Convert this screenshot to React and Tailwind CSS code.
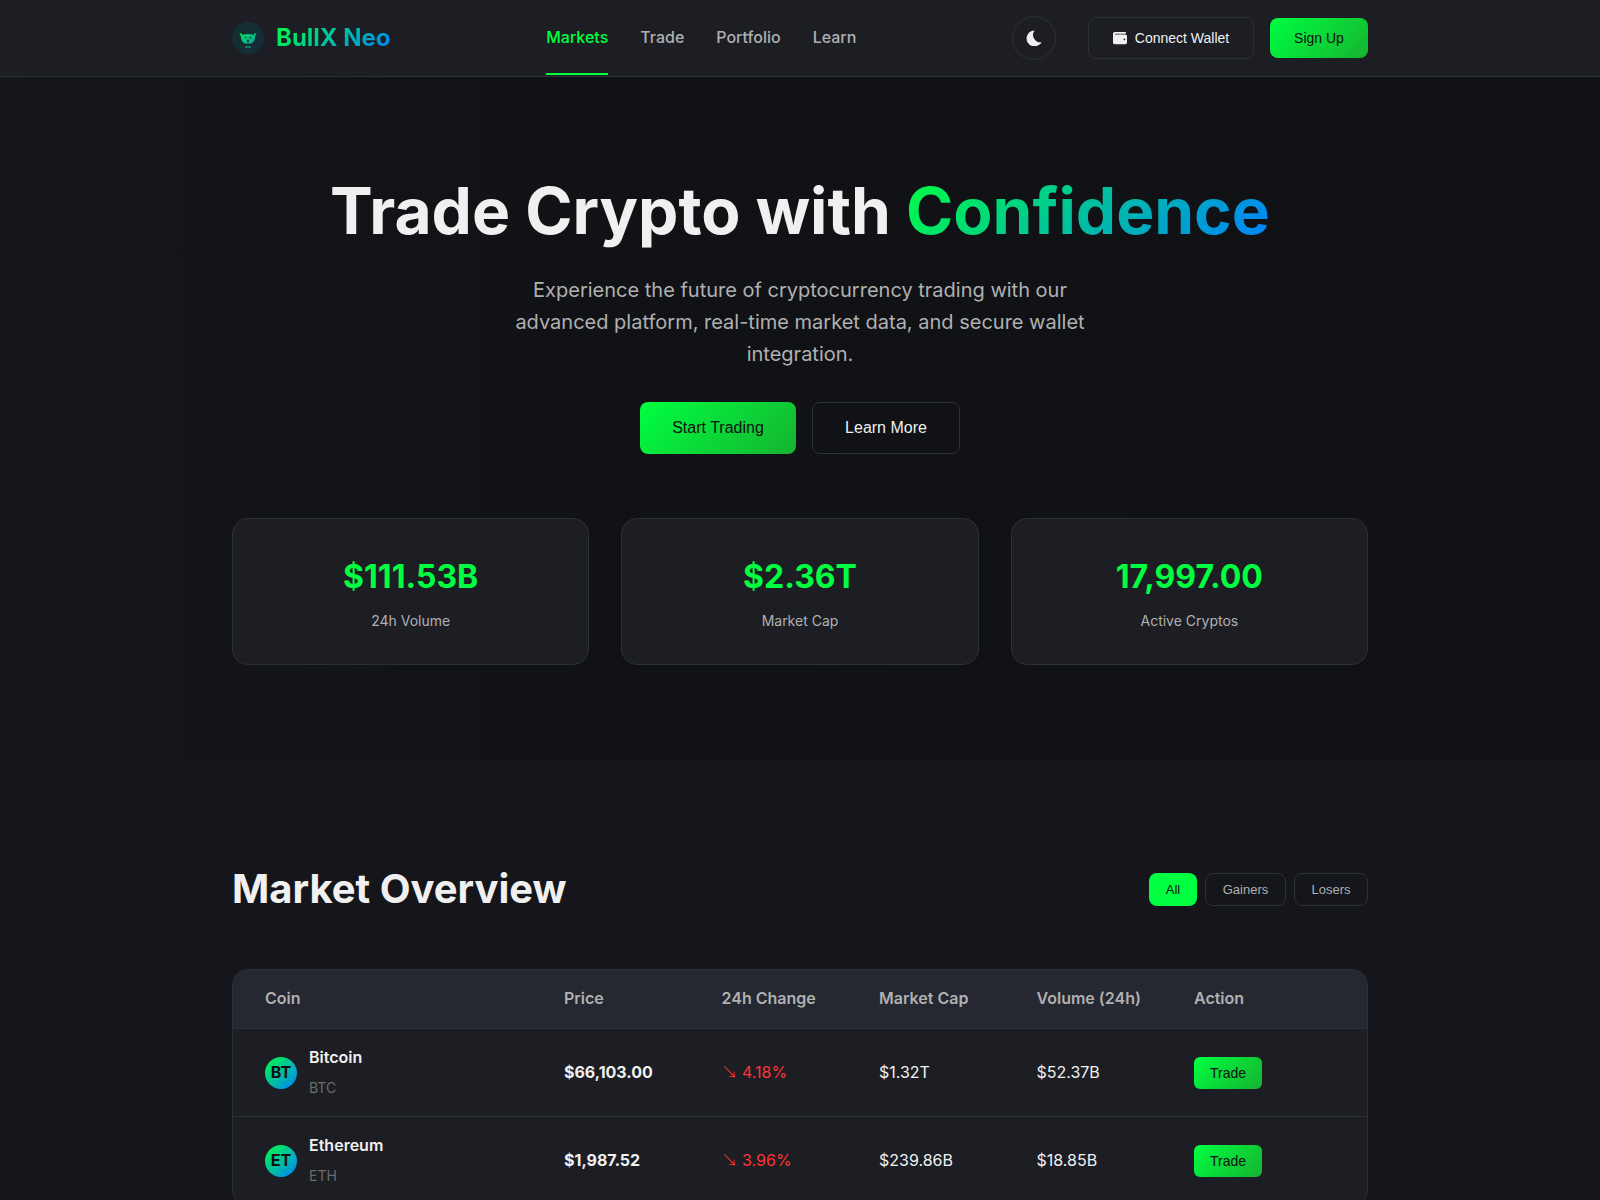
import React from "react";

const Wallet = () => (
  <svg viewBox="0 0 512 512" className="w-[14px] h-[14px]" fill="currentColor">
    <path d="M64 32C28.7 32 0 60.7 0 96V416c0 35.3 28.7 64 64 64H448c35.3 0 64-28.7 64-64V192c0-35.3-28.7-64-64-64H80c-8.8 0-16-7.2-16-16s7.2-16 16-16H448c17.7 0 32-14.3 32-32s-14.3-32-32-32H64zM416 272a32 32 0 1 1 0 64 32 32 0 1 1 0-64z" />
  </svg>
);

const Moon = () => (
  <svg viewBox="0 0 16 16" className="w-[16px] h-[16px]" fill="#f0f0f0">
    <path d="M8.6 0.4A8 8 0 1 0 15.6 12.2A7.4 7.4 0 0 1 8.6 0.4Z" />
  </svg>
);

const Logo = () => (
  <div className="w-[32px] h-[32px] rounded-full bg-[linear-gradient(135deg,#12302c,#152c3c)] flex items-center justify-center">
    <svg viewBox="0 0 32 32" className="w-[32px] h-[32px]">
      <defs>
        <linearGradient id="lg" x1="0" y1="0" x2="1" y2="1">
          <stop offset="0" stopColor="#00e858" />
          <stop offset="1" stopColor="#10a0a0" />
        </linearGradient>
      </defs>
      <path d="M7.5 10.5L11 12.8Q16 11.4 21 12.8L24.5 10.5L23 15Q22.8 20.4 19 21.4H13Q9.2 20.4 9 15Z" fill="url(#lg)" />
      <circle cx="13.6" cy="15.6" r="0.9" fill="#12403c" />
      <circle cx="18.4" cy="15.6" r="0.9" fill="#12403c" />
      <ellipse cx="16" cy="19" rx="1.2" ry="1.5" fill="#12403c" />
      <rect x="13" y="24" width="6" height="2" fill="#0c7a5a" />
    </svg>
  </div>
);

const NavLink = ({ children, active }) => (
  <a className={active
    ? "relative h-[76px] pb-[1px] flex items-center text-[16px] font-medium text-[#00ff41]"
    : "relative h-[76px] pb-[1px] flex items-center text-[16px] font-medium text-[#b0b0b0]"}>
    {children}
    {active && <span className="absolute left-0 right-0 bottom-[1px] h-[2px] bg-[#00ff41]" />}
  </a>
);

const Stat = ({ value, label }) => (
  <div className="h-[147px] bg-[#1c1e24] border border-[#2e3038] rounded-[16px] flex flex-col items-center pt-[32px]">
    <div className="text-[32px] leading-[51.2px] font-bold text-[#00ff41]">{value}</div>
    <div className="text-[14px] leading-[22.4px] mt-[8px] text-[#b0b0b0]">{label}</div>
  </div>
);

const rows = [
  { i: "BT", name: "Bitcoin", sym: "BTC", price: "$66,103.00", ch: "4.18%", cap: "$1.32T", vol: "$52.37B" },
  { i: "ET", name: "Ethereum", sym: "ETH", price: "$1,987.52", ch: "3.96%", cap: "$239.86B", vol: "$18.85B" },
];

export default function App() {
  return (
    <div className="h-[1200px] overflow-hidden bg-[#14161b] text-white font-['Inter',sans-serif] leading-[1.6]">
      <header className="h-[77px] bg-[#1c1e24] border-b border-[#2e3038]">
        <div className="max-w-[1200px] mx-auto px-[32px] h-[76px] flex items-center justify-between">
          <div className="flex items-center gap-[12px]">
            <Logo />
            <span className="text-[24px] font-bold bg-[linear-gradient(135deg,#00ff41,#0080ff)] bg-clip-text text-transparent">BullX Neo</span>
          </div>
          <nav className="flex gap-[32px] h-[76px]">
            <NavLink active>Markets</NavLink>
            <NavLink>Trade</NavLink>
            <NavLink>Portfolio</NavLink>
            <NavLink>Learn</NavLink>
          </nav>
          <div className="flex items-center gap-[16px] font-['Liberation_Sans',sans-serif]">
            <button className="w-[44px] h-[44px] rounded-full border border-[#2e3038] flex items-center justify-center mr-[16px]"><Moon /></button>
            <button className="h-[42px] w-[166px] rounded-[8px] border border-[#2e3038] flex items-center justify-center gap-[8px] text-[14px] text-[#f0f0f0]"><Wallet />Connect Wallet</button>
            <button className="h-[40px] w-[98px] rounded-[8px] bg-[linear-gradient(135deg,#00ff41,#16b32f)] text-[14px] text-[#0f1014]">Sign Up</button>
          </div>
        </div>
      </header>

      <section className="h-[683px] bg-[linear-gradient(90deg,#14161a_0%,#101216_35%,#0f1115_100%)] pt-[95px]">
        <div className="max-w-[1200px] mx-auto px-[32px]">
          <h1 className="text-[64px] leading-[77px] font-bold text-center text-[#f0f0f0]">
            Trade Crypto with <span className="bg-[linear-gradient(135deg,#00ff41,#0080ff)] bg-clip-text text-transparent">Confidence</span>
          </h1>
          <p className="w-[600px] mx-auto mt-[25px] text-[20px] leading-[32px] text-center text-[#b0b0b0]">
            Experience the future of cryptocurrency trading with our advanced platform, real-time market data, and secure wallet integration.
          </p>
          <div className="flex justify-center gap-[16px] mt-[32px] font-['Liberation_Sans',sans-serif]">
            <button className="w-[156px] h-[52px] rounded-[8px] bg-[linear-gradient(135deg,#00ff41,#16b32f)] text-[16px] text-[#0f1014]">Start Trading</button>
            <button className="w-[148px] h-[52px] rounded-[8px] border border-[#2e3038] text-[16px] text-[#f0f0f0]">Learn More</button>
          </div>
          <div className="grid grid-cols-3 gap-[32px] mt-[64px]">
            <Stat value="$111.53B" label="24h Volume" />
            <Stat value="$2.36T" label="Market Cap" />
            <Stat value="17,997.00" label="Active Cryptos" />
          </div>
        </div>
      </section>

      <section className="pt-[97px]">
        <div className="max-w-[1200px] mx-auto px-[32px]">
          <div className="flex items-center justify-between">
            <h2 className="text-[40px] leading-[64px] font-bold text-[#f0f0f0]">Market Overview</h2>
            <div className="flex gap-[8px] font-['Liberation_Sans',sans-serif] text-[13px]">
              <button className="h-[33px] w-[48px] pt-[2px] rounded-[8px] bg-[#00ff41] text-[#0f1014]">All</button>
              <button className="h-[33px] w-[81px] pt-[2px] rounded-[8px] border border-[#2e3038] text-[#b0b0b0]">Gainers</button>
              <button className="h-[33px] w-[74px] pt-[2px] rounded-[8px] border border-[#2e3038] text-[#b0b0b0]">Losers</button>
            </div>
          </div>
          <div className="mt-[48px] rounded-[16px] border border-[#2e3038] bg-[#1c1e24] overflow-hidden">
            <table className="w-full table-fixed border-collapse">
              <colgroup>
                <col className="w-[331px]" />
                <col className="w-[157.5px]" />
                <col className="w-[157.5px]" />
                <col className="w-[157.5px]" />
                <col className="w-[157.5px]" />
                <col />
              </colgroup>
              <thead>
                <tr className="bg-[#252831] h-[58px] border-b border-[#2e3038]">
                  {["Coin", "Price", "24h Change", "Market Cap", "Volume (24h)", "Action"].map((h, i) => (
                    <th key={h} className={i === 0 ? "text-left pl-[32px] text-[16px] font-semibold text-[#b0b0b0]" : "text-left text-[16px] font-semibold text-[#b0b0b0]"}>{h}</th>
                  ))}
                </tr>
              </thead>
              <tbody>
                {rows.map((r) => (
                  <tr key={r.sym} className="h-[88px] border-b border-[#2e3038]">
                    <td className="pl-[32px]">
                      <div className="flex items-center gap-[12px]">
                        <div className="w-[32px] h-[32px] mt-[1px] rounded-full bg-[linear-gradient(135deg,#00ff41,#0080ff)] flex items-center justify-center text-[16px] font-bold text-[#0f1014]">{r.i}</div>
                        <div>
                          <div className="text-[16px] leading-[25.6px] font-semibold text-[#f0f0f0]">{r.name}</div>
                          <div className="text-[14px] leading-[22.4px] mt-[6px] text-[#6b6b6b]">{r.sym}</div>
                        </div>
                      </div>
                    </td>
                    <td className="pt-[1px] text-[16px] font-bold text-[#f0f0f0]">{r.price}</td>
                    <td className="pt-[1px] text-[16px] text-[#ff3333]"><span className="font-['Noto_Sans_CJK_SC',sans-serif] font-light">↘</span> {r.ch}</td>
                    <td className="pt-[1px] text-[16px] text-[#f0f0f0]">{r.cap}</td>
                    <td className="pt-[1px] text-[16px] text-[#f0f0f0]">{r.vol}</td>
                    <td className="pt-[2px]">
                      <button className="w-[68px] h-[32px] rounded-[6px] bg-[linear-gradient(135deg,#00ff41,#16b32f)] text-[14px] text-[#0f1014] font-['Liberation_Sans',sans-serif]">Trade</button>
                    </td>
                  </tr>
                ))}
              </tbody>
            </table>
          </div>
        </div>
      </section>
    </div>
  );
}
